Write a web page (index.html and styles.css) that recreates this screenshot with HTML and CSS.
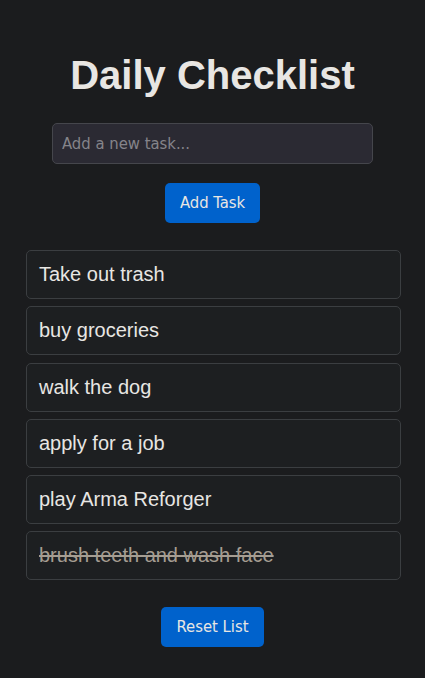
FILE: index.html
```html
<!DOCTYPE html>
<html lang="en">
  <head>
    <meta charset="UTF-8" />
    <meta name="viewport" content="width=device-width, initial-scale=1.0" />
    <title>Daily Checklist</title>
    <link rel="stylesheet" href="styles.css">
  </head>
  <body>
    <div class="app">
      <h1 class="app-title">Daily Checklist</h1>

      <input type="text" class="task-input" id="task-input" placeholder="Add a new task..." />
      <button class="btn add-btn" onclick="addTask()">Add Task</button>

      <ul class="task-list" id="task-list">
        <li class="task">Take out trash</li>
        <li class="task">buy groceries</li>
        <li class="task">walk the dog</li>
        <li class="task">apply for a job</li>
        <li class="task">play Arma Reforger</li>
        <li class="task done">brush teeth and wash face</li>
      </ul>

      <button class="btn reset-btn" onclick="resetList()">Reset List</button>
    </div>

    <script>
      const list = document.getElementById("task-list");

      list.addEventListener("click", (e) => {
        if (e.target.classList.contains("task")) {
          e.target.classList.toggle("done");
        }
      });

      function addTask() {
        const input = document.getElementById("task-input");
        const text = input.value.trim();
        if (!text) return;
        const li = document.createElement("li");
        li.className = "task";
        li.textContent = text;
        list.appendChild(li);
        input.value = "";
      }

      function resetList() {
        list.querySelectorAll(".task").forEach((task) => {
          task.classList.remove("done");
        });
      }
    </script>
  </body>
</html>
```

FILE: styles.css
```css
* {
  margin: 0;
  padding: 0;
  box-sizing: border-box;
}

body {
  background-color: #1b1c1e;
  color: #e8e6e3;
  font-family: "Liberation Sans", Arial, sans-serif;
  min-height: 100vh;
}

.app {
  display: flex;
  flex-direction: column;
  align-items: center;
  padding: 52px 25px 30px;
}

.app-title {
  font-size: 40px;
  line-height: 46px;
  font-weight: bold;
  margin-bottom: 25px;
}

.task-input {
  width: 321px;
  height: 41px;
  padding: 0 9px;
  background-color: #2b2a33;
  border: 1px solid #45464c;
  border-radius: 5px;
  color: #e8e6e3;
  font-family: "DejaVu Sans Condensed", "DejaVu Sans", sans-serif;
  font-size: 16.5px;
}

.task-input::placeholder {
  color: #85848a;
}

.task-input:focus {
  outline: none;
  border-color: #0062cc;
}

.btn {
  padding: 10px 15px;
  line-height: 20px;
  background-color: #0062cc;
  border: none;
  border-radius: 5px;
  color: #e8e6e3;
  font-family: "DejaVu Sans Condensed", "DejaVu Sans", sans-serif;
  font-size: 16.5px;
  cursor: pointer;
}

.btn:hover {
  background-color: #0055b3;
}

.add-btn {
  margin-top: 19px;
}

.task-list {
  list-style: none;
  align-self: stretch;
  margin: 27px -1px 0 1px;
}

.task {
  padding: 12px;
  font-size: 20px;
  line-height: 23px;
  background-color: #1d1f21;
  border: 1px solid #3b3e41;
  border-radius: 5px;
  margin-bottom: 7.25px;
  cursor: pointer;
}

.task:last-child {
  margin-bottom: 0;
}

.task.done {
  color: #a59d92;
  text-decoration: line-through;
}

.reset-btn {
  margin-top: 27px;
}
```
